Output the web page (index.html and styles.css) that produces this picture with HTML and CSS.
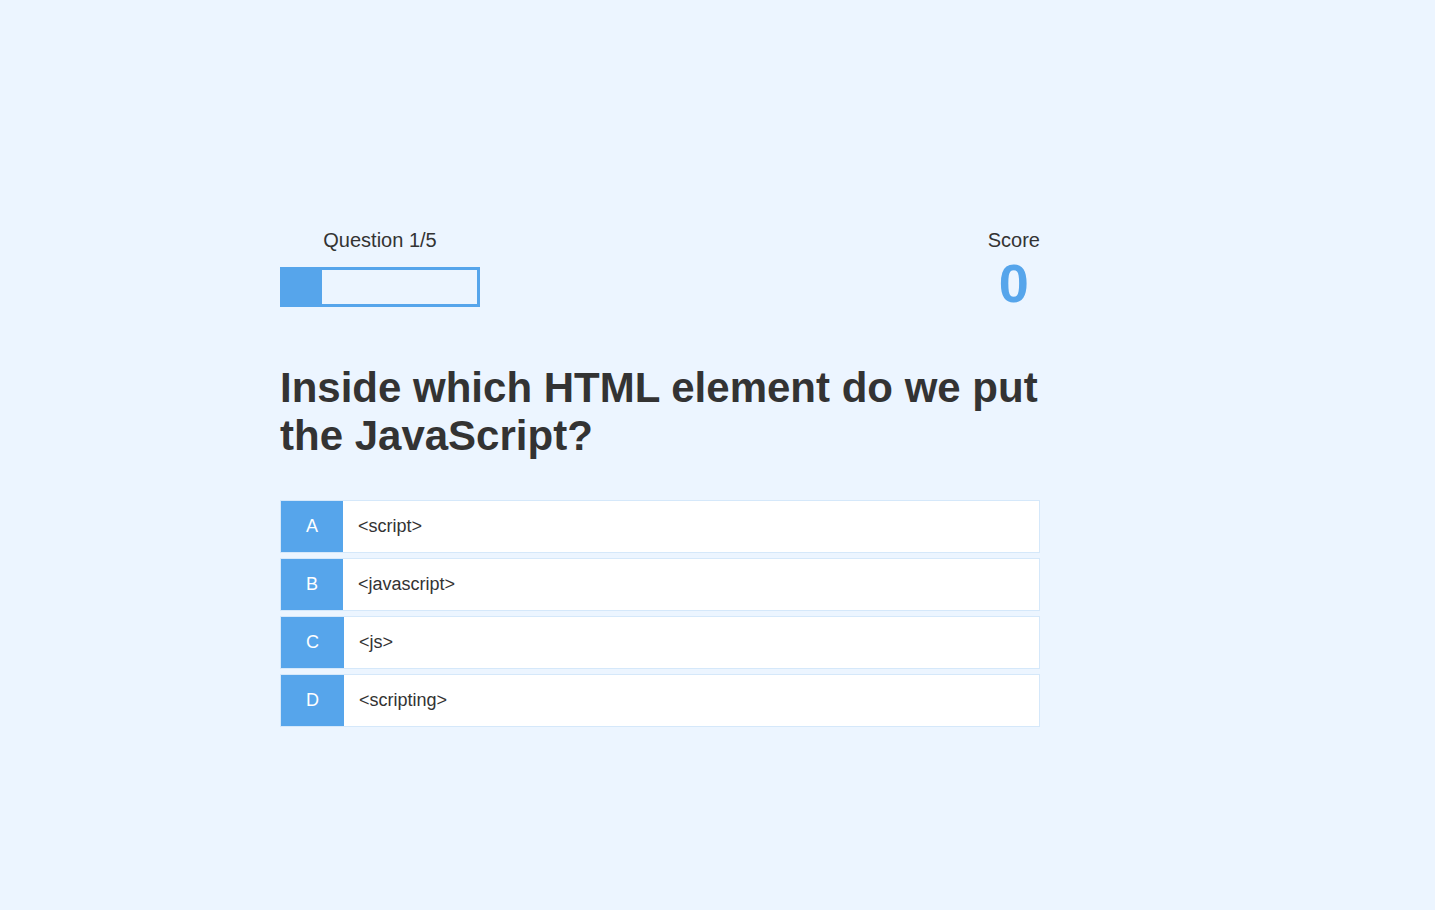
FILE: index.html
```html
<!DOCTYPE html>
<html lang="en">
<head>
<meta charset="UTF-8">
<title>Quick Quiz - Play</title>
<link rel="stylesheet" href="styles.css">
</head>
<body>
<div class="container">
  <div class="game">
    <div class="hud">
      <div class="hud-item">
        <p class="hud-prefix">Question 1/5</p>
        <div class="progress-bar">
          <div class="progress-bar-full" style="width: 20%;"></div>
        </div>
      </div>
      <div class="hud-item">
        <p class="hud-prefix">Score</p>
        <h1 class="hud-main-text">0</h1>
      </div>
    </div>
    <h2 class="question">Inside which HTML element do we put the JavaScript?</h2>
    <div class="choice-container">
      <p class="choice-prefix">A</p>
      <p class="choice-text">&lt;script&gt;</p>
    </div>
    <div class="choice-container">
      <p class="choice-prefix">B</p>
      <p class="choice-text">&lt;javascript&gt;</p>
    </div>
    <div class="choice-container">
      <p class="choice-prefix">C</p>
      <p class="choice-text">&lt;js&gt;</p>
    </div>
    <div class="choice-container">
      <p class="choice-prefix">D</p>
      <p class="choice-text">&lt;scripting&gt;</p>
    </div>
  </div>
</div>
</body>
</html>
```
FILE: styles.css
```css
html {
  background-color: #ecf5ff;
}
* {
  box-sizing: border-box;
  font-family: "Liberation Sans", Arial, Helvetica, sans-serif;
  margin: 0;
  padding: 0;
  color: #333;
}
body {
  margin: 0;
  background-color: #ecf5ff;
}
.container {
  width: 800px;
  margin-left: 260px;
  padding: 229px 20px 0;
}
.game {
  width: 100%;
}
.hud {
  display: flex;
  justify-content: space-between;
}
.hud-prefix {
  text-align: center;
  font-size: 20px;
}
.hud-main-text {
  text-align: center;
  font-size: 54px;
  color: #56a5eb;
  margin-bottom: 50px;
  font-weight: bold;
}
.progress-bar {
  width: 200px;
  height: 40px;
  border: 3px solid #56a5eb;
  margin-top: 15px;
}
.progress-bar-full {
  height: 34px;
  background-color: #56a5eb;
}
.question {
  font-size: 42px;
  font-weight: 700;
  margin-bottom: 40px;
}
.choice-container {
  display: flex;
  margin-bottom: 5px;
  width: 100%;
  font-size: 18px;
  border: 1px solid rgba(86, 165, 235, 0.25);
  background-color: #fff;
}
.choice-prefix {
  padding: 15px 25px;
  background-color: #56a5eb;
  color: #fff;
}
.choice-text {
  padding: 15px;
  width: 100%;
}
```
